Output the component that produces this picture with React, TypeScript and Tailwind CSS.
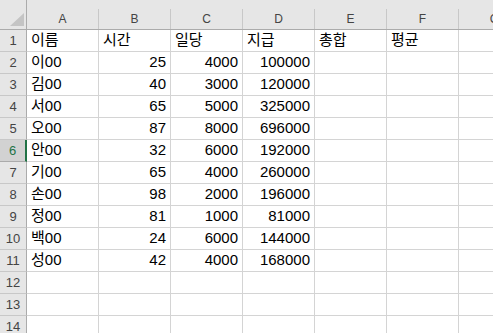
const cols = ['A', 'B', 'C', 'D', 'E', 'F', 'G']

const rows: (string | number)[][] = [
  ['이름', '시간', '일당', '지급', '총합', '평균'],
  ['이00', 25, 4000, 100000],
  ['김00', 40, 3000, 120000],
  ['서00', 65, 5000, 325000],
  ['오00', 87, 8000, 696000],
  ['안00', 32, 6000, 192000],
  ['기00', 65, 4000, 260000],
  ['손00', 98, 2000, 196000],
  ['정00', 81, 1000, 81000],
  ['백00', 24, 6000, 144000],
  ['성00', 42, 4000, 168000],
  [],
  [],
  [],
]

const font = { fontFamily: '"Liberation Sans", "Noto Sans CJK KR", sans-serif' }

export default function App() {
  return (
    <div className="w-[493px] h-[333px] overflow-hidden bg-white" style={font}>
      {/* column headers */}
      <div className="flex h-[30px] bg-[#e6e6e6] border-b border-[#ababab]">
        <div className="relative w-[27px] shrink-0 border-r border-[#ababab]">
          <div className="absolute left-[10px] top-[13px] w-0 h-0 border-l-[14px] border-l-transparent border-b-[13px] border-b-[#c4c4c4]" />
        </div>
        {cols.map((c) => (
          <div key={c} className="w-[72px] shrink-0 flex items-end pt-[9px]">
            <div className="flex-1 h-full flex items-center justify-center text-[12px] text-[#444] border-r border-[#c8c8c8]">
              {c}
            </div>
          </div>
        ))}
      </div>

      {rows.map((r, i) => {
        const sel = i === 5
        return (
          <div key={i} className="flex h-[22px]">
            <div
              className={
                sel
                  ? 'w-[27px] shrink-0 flex items-center justify-center text-[13px] text-[#217346] bg-[#d2d2d2] border-r-2 border-[#217346] border-b border-b-[#ababab]'
                  : 'w-[27px] shrink-0 flex items-center justify-center text-[13px] text-[#444] bg-[#e6e6e6] border-r border-[#ababab] border-b border-b-[#c8c8c8]'
              }
            >
              {i + 1}
            </div>
            {cols.map((c, j) => {
              const v = r[j]
              const num = typeof v === 'number'
              return (
                <div
                  key={c}
                  className={
                    num
                      ? 'w-[72px] shrink-0 flex items-center justify-end pr-[4px] text-[15px] text-black border-r border-b border-[#d4d4d4] whitespace-nowrap'
                      : 'w-[72px] shrink-0 flex items-center pl-[4px] text-[15px] text-black border-r border-b border-[#d4d4d4] whitespace-nowrap'
                  }
                >
                  {v}
                </div>
              )
            })}
          </div>
        )
      })}
    </div>
  )
}
